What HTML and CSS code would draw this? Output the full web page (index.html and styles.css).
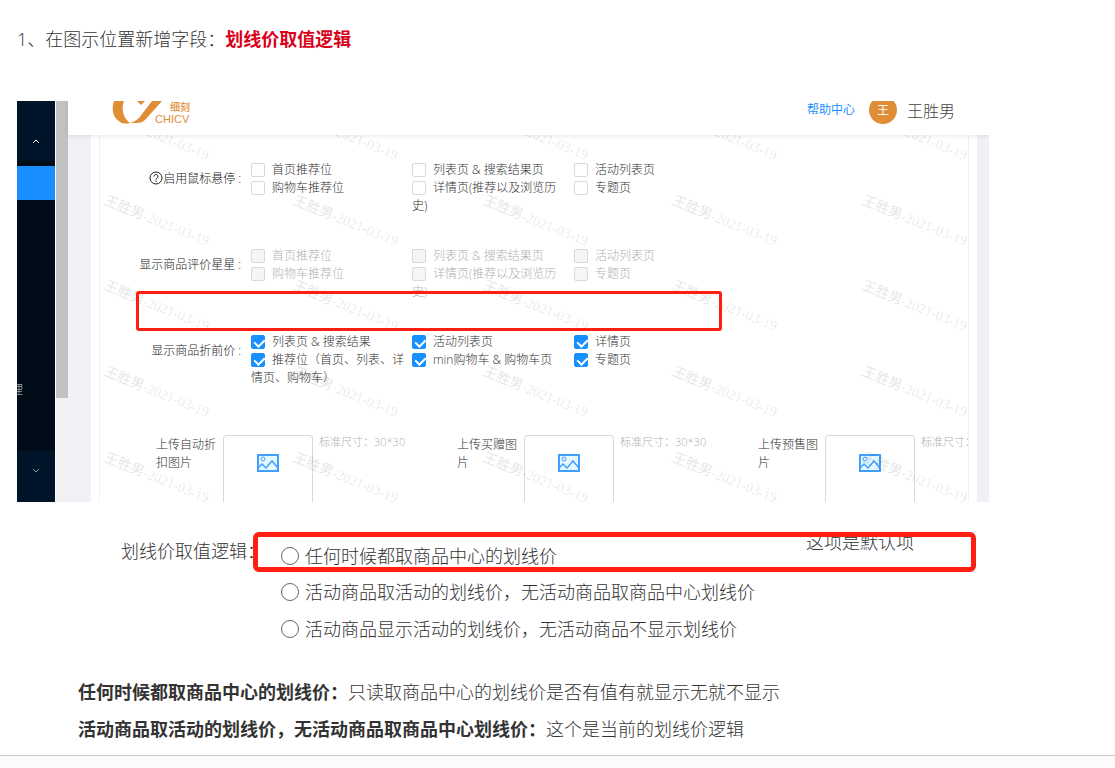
FILE: index.html
```html
<!DOCTYPE html>
<html lang="zh-CN">
<head>
<meta charset="utf-8">
<meta name="viewport" content="width=device-width, initial-scale=1">
<title>划线价取值逻辑</title>
<link rel="stylesheet" href="styles.css">
</head>
<body>
<main class="doc">
  <p class="lead">1、在图示位置新增字段：<strong class="lead-key">划线价取值逻辑</strong></p>

  <section class="mock">
    <nav class="side">
      <div class="side-top">
        <svg class="chev" viewBox="0 0 8 5"><path d="M1 4l3-3 3 3"/></svg>
      </div>
      <div class="side-active"></div>
      <div class="side-sub"><span class="side-text">理</span></div>
      <div class="side-bottom">
        <svg class="chev chev-dim" viewBox="0 0 8 5"><path d="M1 1l3 3 3-3"/></svg>
      </div>
    </nav>
    <div class="scroll"><div class="thumb"></div></div>

    <div class="app">
      <header class="top">
        <svg class="logo" width="80" height="26" viewBox="0 0 80 26">
          <path class="logo-mark" d="M2 0C-1 9 1 18 10 22q4 1 8 0C11 17 9 8 12 0zM25 0h8l-4 4zM40 0h10L33 19q-3 3-8 3h-7q5-1 9-5z"/>
          <text class="logo-cn" x="58" y="10">细刻</text>
          <text class="logo-en" x="43" y="22">CHICV</text>
        </svg>
        <div class="user">
          <a class="help" href="#">帮助中心</a>
          <span class="avatar">王</span>
          <span class="name">王胜男</span>
        </div>
      </header>

      <div class="card">
        <form class="form">
          <div class="group">
            <div class="label"><svg class="q" viewBox="0 0 14 14"><circle cx="7" cy="7" r="6"/><path d="M5 5.500a2 2 0 1 1 3 1.700q-1 .5-1 1.400M7 9.500v1.300"/></svg>启用鼠标悬停<span class="colon">:</span></div>
            <div class="checks">
              <label class="check"><input type="checkbox">首页推荐位</label>
              <label class="check"><input type="checkbox">列表页 &amp; 搜索结果页</label>
              <label class="check"><input type="checkbox">活动列表页</label>
              <label class="check"><input type="checkbox">购物车推荐位</label>
              <label class="check"><input type="checkbox">详情页(推荐以及浏览历史)</label>
              <label class="check"><input type="checkbox">专题页</label>
            </div>
          </div>
          <div class="group">
            <div class="label">显示商品评价星星<span class="colon">:</span></div>
            <div class="checks checks-off">
              <label class="check"><input type="checkbox" disabled>首页推荐位</label>
              <label class="check"><input type="checkbox" disabled>列表页 &amp; 搜索结果页</label>
              <label class="check"><input type="checkbox" disabled>活动列表页</label>
              <label class="check"><input type="checkbox" disabled>购物车推荐位</label>
              <label class="check"><input type="checkbox" disabled>详情页(推荐以及浏览历史)</label>
              <label class="check"><input type="checkbox" disabled>专题页</label>
            </div>
          </div>
          <div class="group">
            <div class="label">显示商品折前价<span class="colon">:</span></div>
            <div class="checks">
              <label class="check"><input type="checkbox" checked>列表页 &amp; 搜索结果</label>
              <label class="check"><input type="checkbox" checked>活动列表页</label>
              <label class="check"><input type="checkbox" checked>详情页</label>
              <label class="check"><input type="checkbox" checked>推荐位（首页、列表、详情页、购物车）</label>
              <label class="check"><input type="checkbox" checked>min购物车 &amp; 购物车页</label>
              <label class="check"><input type="checkbox" checked>专题页</label>
            </div>
          </div>
          <div class="uploads">
            <div class="upload">
              <div class="upload-label">上传自动折扣图片</div>
              <button class="drop" type="button" aria-label="上传自动折扣图片"><svg class="pic" viewBox="0 0 22 18"><path class="pic-bg" d="M1 1h20v16H1z"/><circle cx="6" cy="5" r="2"/><path class="pic-line" d="M1 14l4-4 4 4 6-7 6 7"/></svg></button>
              <div class="hint">标准尺寸：30*30</div>
            </div>
            <div class="upload">
              <div class="upload-label">上传买赠图片</div>
              <button class="drop" type="button" aria-label="上传买赠图片"><svg class="pic" viewBox="0 0 22 18"><path class="pic-bg" d="M1 1h20v16H1z"/><circle cx="6" cy="5" r="2"/><path class="pic-line" d="M1 14l4-4 4 4 6-7 6 7"/></svg></button>
              <div class="hint">标准尺寸：30*30</div>
            </div>
            <div class="upload">
              <div class="upload-label">上传预售图片</div>
              <button class="drop" type="button" aria-label="上传预售图片"><svg class="pic" viewBox="0 0 22 18"><path class="pic-bg" d="M1 1h20v16H1z"/><circle cx="6" cy="5" r="2"/><path class="pic-line" d="M1 14l4-4 4 4 6-7 6 7"/></svg></button>
              <div class="hint">标准尺寸：30*30</div>
            </div>
          </div>
          <div class="slot"></div>
        </form>
        <svg class="marks" id="marks" aria-hidden="true"></svg>
      </div>
    </div>
  </section>

  <section class="field">
    <div class="field-label" id="field-label">划线价取值逻辑：</div>
    <div class="options" role="radiogroup" aria-labelledby="field-label">
      <div class="option option-default">
        <label class="choice"><input type="radio" name="rule">任何时候都取商品中心的划线价</label>
        <span class="note">这项是默认项</span>
      </div>
      <div class="option"><label class="choice"><input type="radio" name="rule">活动商品取活动的划线价，无活动商品取商品中心划线价</label></div>
      <div class="option"><label class="choice"><input type="radio" name="rule">活动商品显示活动的划线价，无活动商品不显示划线价</label></div>
    </div>
  </section>

  <section class="explain">
    <p><strong>任何时候都取商品中心的划线价：</strong>只读取商品中心的划线价是否有值有就显示无就不显示</p>
    <p><strong>活动商品取活动的划线价，无活动商品取商品中心划线价：</strong>这个是当前的划线价逻辑</p>
  </section>
</main>
<script src="marks.js"></script>
</body>
</html>
```

FILE: marks.js
```js
// Repeats the slanted watermark over the card.
const layer = document.getElementById('marks');
for (let row = 0; row < 5; row++) {
  for (let col = 0; col < 5; col++) {
    const t = document.createElementNS('http://www.w3.org/2000/svg', 'text');
    const x = 12 + Math.round(col * 189.4);
    const y = -17 + Math.round(row * 85.7);
    t.setAttribute('transform', `translate(${x} ${y}) rotate(22)`);
    t.textContent = '王胜男-2021-03-19';
    layer.appendChild(t);
  }
}
```

FILE: styles.css
```css
* { box-sizing: border-box; }

body {
  margin: 0;
  background: #fbfbfb;
  color: #333;
  font-family: "Open Sans", "Noto Sans CJK SC", sans-serif;
  font-size: 18px;
  font-weight: 300;
  line-height: 37px;
}

p { margin: 0; }
strong { font-weight: 700; }

.doc {
  padding: 21px 126px 7px 17px;
  background: #fff;
  border-bottom: 1px solid #ccc;
}

.lead { margin-bottom: 43px; }
.lead-key { color: #d9001b; }

/* Embedded admin page */
.mock {
  display: flex;
  overflow: hidden;
  font-size: 12px;
  line-height: 18px;
}

.side {
  display: flex;
  flex-direction: column;
  width: 38px;
  background: #000c17;
  overflow: hidden;
}
.side-top,
.side-bottom {
  display: flex;
  justify-content: center;
  background: #001529;
}
.side-top { height: 60px; padding-top: 38px; margin-bottom: 5px; }
.side-active { height: 34px; background: #1890ff; }
.side-sub { flex: 1; padding-top: 181px; }
.side-text { display: block; margin-left: -6px; color: #c5cad0; }
.side-bottom { height: 51px; padding-top: 17px; }
.chev {
  width: 8px;
  height: 5px;
  fill: none;
  stroke: #fff;
}
.chev-dim { stroke: #8c97a3; }

.scroll {
  width: 12px;
  margin-left: 1px;
  background: #f1f1f1;
}
.thumb { height: 74%; background: #c1c1c1; }

.app {
  flex: 1;
  min-width: 0;
  background: #eff1f6;
}

.top {
  position: relative;
  z-index: 2;
  display: flex;
  justify-content: space-between;
  height: 34px;
  padding: 0 34px 0 44px;
  background: #fff;
  box-shadow: 0 1px 4px rgba(0, 21, 41, 0.1);
}
.logo-mark,
.logo-cn,
.logo-en { fill: #e08e36; }
.logo-cn { font-size: 10px; font-weight: 500; }
.logo-en { font-family: "Liberation Sans", sans-serif; font-size: 11px; font-weight: 400; }
.user {
  display: flex;
  height: 34px;
}
.help { color: #1890ff; font-weight: 400; text-decoration: none; }
.avatar {
  width: 28px;
  height: 28px;
  margin: -5px 10px 0 14px;
  border-radius: 50%;
  background: #e08e36;
  color: #fff;
  font-weight: 400;
  line-height: 30px;
  text-align: center;
}
.name { color: #444; font-size: 16px; line-height: 20px; }

.card {
  position: relative;
  margin: 0 12px 0 23px;
  padding: 0 8px;
  background: #fff;
}
.form {
  position: relative;
  padding-top: 26px;
  border: solid #f0f0f0;
  border-width: 0 1px;
  color: #333;
}
.group { display: flex; min-height: 86px; }
.label {
  width: 151px;
  padding: 9px 10px 0 0;
  color: #222;
  text-align: right;
  white-space: nowrap;
}
.colon { margin-left: 3px; }
.q {
  width: 14px;
  height: 14px;
  vertical-align: -2px;
  fill: none;
  stroke: #222;
}
.checks {
  display: grid;
  grid-template-columns: 161px 162px 160px;
  align-content: start;
}
.check { padding-right: 8px; }
.check input {
  appearance: none;
  width: 14px;
  height: 14px;
  margin: 0 7px 0 0;
  border: 1px solid #d9d9d9;
  border-radius: 2px;
  background: #fff;
  vertical-align: -3px;
}
.check input:checked {
  position: relative;
  border-color: #1890ff;
  background: #1890ff;
}
.check input:checked::after {
  content: "";
  position: absolute;
  top: 1px;
  left: 4px;
  width: 5px;
  height: 8px;
  border: solid #fff;
  border-width: 0 2px 2px 0;
  transform: rotate(45deg);
}
.checks-off { color: #b0b0b0; }
.check input:disabled { background: #f5f5f5; }

.uploads {
  display: flex;
  padding: 16px 0 0 56px;
  overflow: hidden;
}
.upload { display: flex; flex: 0 0 301px; }
.upload-label { width: 60px; margin-right: 7px; padding-top: 1px; }
.drop {
  display: flex;
  justify-content: center;
  width: 90px;
  height: 67px;
  padding: 18px 0 0;
  border: 1px solid #d9d9d9;
  border-bottom: 0;
  border-radius: 4px 4px 0 0;
  background: #fff;
}
.pic {
  width: 22px;
  height: 18px;
  fill: none;
  stroke: #40a0ff;
}
.pic-bg { fill: #e6f7ff; stroke-width: 2; }
.pic-line { stroke-width: 1.5; }
.hint {
  margin-left: 6px;
  color: #b0b0b0;
  font-size: 11px;
  line-height: 14px;
  white-space: nowrap;
}

/* Red frame marking where the new field goes */
.slot {
  position: absolute;
  z-index: 3;
  top: 156px;
  left: 36px;
  width: 586px;
  height: 40px;
  border: 3px solid #ff1e10;
  border-radius: 3px;
}

.marks {
  position: absolute;
  inset: 0;
  width: 100%;
  height: 100%;
  pointer-events: none;
}
.marks text {
  fill: rgba(0, 0, 0, 0.1);
  font-family: "Liberation Serif", "Noto Sans CJK SC", serif;
  font-size: 14px;
  font-weight: 500;
}

/* New field */
.field {
  display: flex;
  margin-top: 30px;
  padding: 0 13px 0 104px;
}
.field-label {
  width: 132px;
  padding-top: 1px;
  white-space: nowrap;
}
.options { flex: 1; }
.option-default {
  position: relative;
  display: flex;
  justify-content: space-between;
  height: 40px;
  margin-bottom: 2px;
  padding: 8px 57px 0 0;
  border: 5px solid #ff1e10;
  border-radius: 6px;
  background: #fff;
  line-height: 23px;
  overflow: hidden;
}
.choice { display: block; padding-left: 28px; }
.option-default .choice { padding-left: 23px; }
.choice input {
  appearance: none;
  width: 18px;
  height: 18px;
  margin: 0 6px 0 0;
  border: 1px solid #666;
  border-radius: 50%;
  vertical-align: -2px;
}
.choice input:checked { box-shadow: inset 0 0 0 4px #fff; background: #1890ff; }
.note { margin-top: -14px; }

.explain {
  margin-top: 26px;
  padding-left: 61px;
}
```
